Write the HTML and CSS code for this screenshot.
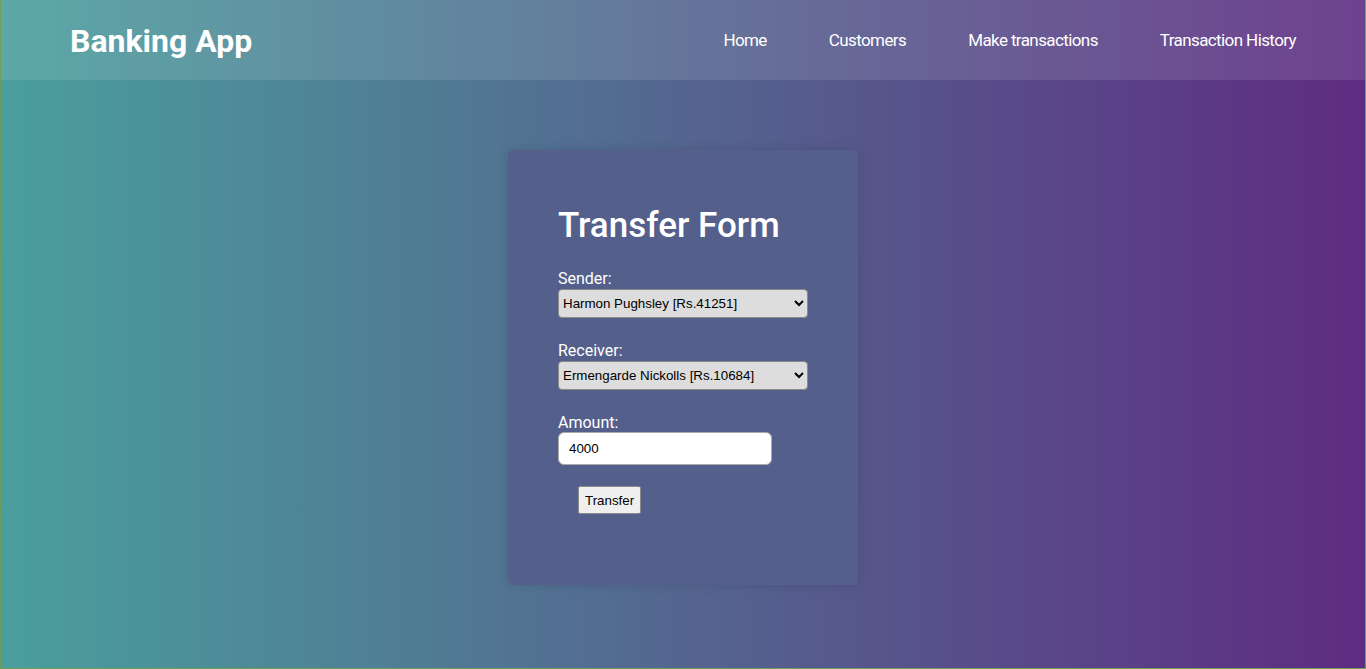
FILE: index.html
```html
<!DOCTYPE html>
<html lang="en">
<head>
<meta charset="utf-8">
<title>Banking App</title>
<link rel="stylesheet" href="styles.css">
</head>
<body>
<header class="navbar">
  <div class="brand">Banking App</div>
  <nav class="links">
    <a href="#">Home</a>
    <a href="#">Customers</a>
    <a href="#">Make transactions</a>
    <a href="#">Transaction History</a>
  </nav>
</header>
<main class="main">
  <form class="card">
    <h1 class="title">Transfer Form</h1>
    <div class="field">
      <label class="label">Sender:</label>
      <select class="select"><option>Harmon Pughsley [Rs.41251]</option></select>
    </div>
    <div class="field">
      <label class="label">Receiver:</label>
      <select class="select"><option>Ermengarde Nickolls [Rs.10684]</option></select>
    </div>
    <div class="field">
      <label class="label">Amount:</label>
      <input class="input" type="text" value="4000">
    </div>
    <button class="btn" type="button">Transfer</button>
  </form>
</main>
</body>
</html>
```
FILE: styles.css
```css
* { box-sizing: border-box; }
html, body { height: 100%; }
body {
  margin: 0;
  font-family: Roboto, "Liberation Sans", sans-serif;
  color: #fff;
  background: linear-gradient(to right, #4a9f9d, #5e2c82);
  border: 1px solid #6e9e5a;
  border-top: none;
  overflow: hidden;
}
.navbar {
  height: 80px;
  display: flex;
  align-items: center;
  justify-content: space-between;
  padding: 0 38px 0 69px;
  background: rgba(255, 255, 255, 0.1);
}
.brand {
  font-size: 32px;
  font-weight: 700;
  margin-top: 2px;
}
.links { display: flex; }
.links a {
  color: #fff;
  text-decoration: none;
  font-size: 17px;
  letter-spacing: -0.6px;
  padding: 0 31px;
}
.main {
  display: flex;
  justify-content: center;
  padding-top: 70px;
}
.card {
  width: 350px;
  height: 435px;
  padding: 55px 50px 0;
  background: #555f8c;
  border-radius: 5px;
  box-shadow: 0 0 12px rgba(0, 0, 0, 0.12);
}
.title {
  margin: 0 0 22px;
  font-size: 35px;
  font-weight: 500;
  line-height: 42px;
}
.field { margin-bottom: 23px; }
.label {
  display: block;
  font-size: 16px;
  line-height: 19px;
  margin-bottom: 1px;
}
.select {
  display: block;
  width: 250px;
  height: 29px;
  font-family: "Liberation Sans", Arial, sans-serif;
  font-size: 13.33px;
  color: #000;
  background: #dddddd;
  border: 1px solid #8a8a8a;
  border-radius: 4px;
  padding: 0;
}
.input {
  display: block;
  width: 214px;
  height: 33px;
  padding: 0 10px;
  font-family: "Liberation Sans", Arial, sans-serif;
  font-size: 13.33px;
  color: #000;
  background: #fff;
  border: 1px solid #aaa;
  border-radius: 6px;
  margin-top: -1px;
}
.btn {
  display: block;
  margin: -2px 0 0 20px;
  height: 28px;
  padding: 0 6px;
  font-family: "Liberation Sans", Arial, sans-serif;
  font-size: 13.33px;
  color: #000;
  background: #efefef;
  border: 1px solid #8a8a8a;
  border-radius: 2px;
}
```
